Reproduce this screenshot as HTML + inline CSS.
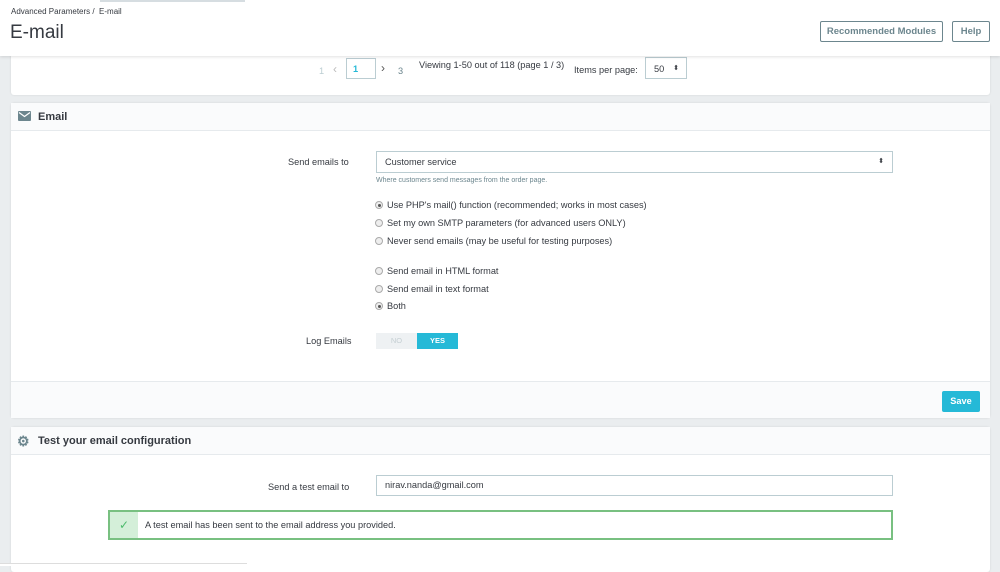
<!DOCTYPE html>
<html><head><style>
*{box-sizing:border-box;margin:0;padding:0}
body{width:1000px;height:566px;overflow:hidden;background:#eaedef;font-family:"Liberation Sans",sans-serif;color:#363a41;position:relative;font-size:9.2px}
.hdr{position:absolute;left:0;top:0;width:1000px;height:56px;background:#fff;box-shadow:0 1px 3px rgba(0,0,0,.12);z-index:2}
.bc{position:absolute;left:11px;top:7px;font-size:8px;color:#363a41}
.title{position:absolute;left:10px;top:22px;font-size:19px;color:#363a41}
.btn{position:absolute;top:21px;height:21px;border:1px solid #6c868e;color:#6c868e;font-size:9.5px;font-weight:bold;line-height:19px;text-align:center;border-radius:2px}
.panel{position:absolute;left:11px;width:979px;background:#fff;border-radius:3px;box-shadow:0 0 2px rgba(0,0,0,.1)}
.ph{height:28px;background:#fafbfc;border-bottom:1px solid #e6eaed;font-size:11px;font-weight:bold;padding-left:27px;line-height:28px;position:relative}
.abs{position:absolute}
.inp{position:absolute;border:1px solid #bbcdd2;background:#fff;height:21px;font-size:9.2px;line-height:19px;padding-left:8px}
.rad{position:absolute;font-size:9.2px}
.rad i{display:inline-block;width:8px;height:8px;border-radius:50%;border:1px solid #aaa;background:#eee;vertical-align:-1px;margin-right:4px;position:relative}
.rad i.on:after{content:"";position:absolute;left:1.5px;top:1.5px;width:3px;height:3px;border-radius:50%;background:#555}
</style></head><body>
<div class="abs" style="left:100px;top:0;width:145px;height:2px;background:#d6dde1;z-index:3"></div>
<div class="hdr">
<div class="bc">Advanced Parameters / &nbsp;E-mail</div>
<div class="title">E-mail</div>
<div class="btn" style="left:820px;width:123px">Recommended Modules</div>
<div class="btn" style="left:952px;width:38px">Help</div>
</div>
<div class="panel" style="top:50px;height:45px">
<div class="abs" style="left:308px;top:16px;color:#bbcdd2">1</div>
<div class="abs" style="left:322px;top:12px;color:#bbb;font-size:12px">‹</div>
<div class="abs" style="left:335px;top:8px;width:30px;height:21px;border:1px solid #bbcdd2;color:#25b9d7;font-weight:bold;padding:5px 6px">1</div>
<div class="abs" style="left:370px;top:11px;color:#555;font-size:12px">›</div>
<div class="abs" style="left:387px;top:16px;color:#6c868e">3</div>
<div class="abs" style="left:408px;top:10px">Viewing 1-50 out of 118 (page 1 / 3)</div>
<div class="abs" style="left:563px;top:15px">Items per page:</div>
<div class="abs" style="left:634px;top:7px;width:42px;height:22px;border:1px solid #bbcdd2;padding:6px 8px;white-space:nowrap">50<span class="abs" style="right:7px;top:6px;font-size:7px">⬍</span></div>
</div>
<div class="panel" style="top:103px;height:315px">
<div class="ph"><svg class="abs" style="left:7px;top:8px" width="13" height="10" viewBox="0 0 13 10"><rect width="13" height="10" rx="1" fill="#6c868e"/><path d="M1 1.5 L6.5 5.5 L12 1.5" stroke="#fff" stroke-width="1.2" fill="none"/></svg>Email</div>
<div class="abs" style="left:277px;top:54px">Send emails to</div>
<div class="inp" style="left:365px;top:48px;width:517px;height:22px;line-height:20px">Customer service<span class="abs" style="right:8px;font-size:7px">⬍</span></div>
<div class="abs" style="left:365px;top:74px;font-size:7px;color:#6c868e">Where customers send messages from the order page.</div>
<div class="rad" style="left:364px;top:97px"><i class="on"></i>Use PHP's mail() function (recommended; works in most cases)</div>
<div class="rad" style="left:364px;top:115px"><i></i>Set my own SMTP parameters (for advanced users ONLY)</div>
<div class="rad" style="left:364px;top:133px"><i></i>Never send emails (may be useful for testing purposes)</div>
<div class="rad" style="left:364px;top:163px"><i></i>Send email in HTML format</div>
<div class="rad" style="left:364px;top:181px"><i></i>Send email in text format</div>
<div class="rad" style="left:364px;top:198px"><i class="on"></i>Both</div>
<div class="abs" style="left:295px;top:233px">Log Emails</div>
<div class="abs" style="left:365px;top:230px;width:41px;height:16px;background:#eef1f3;color:#c5cfd3;font-size:7.5px;text-align:center;line-height:16px">NO</div>
<div class="abs" style="left:406px;top:230px;width:41px;height:16px;background:#25b9d7;color:#fff;font-size:7.5px;font-weight:bold;text-align:center;line-height:16px">YES</div>
<div class="abs" style="left:0;top:278px;width:979px;height:37px;background:#fafbfc;border-top:1px solid #e6eaed"></div>
<div class="abs" style="left:931px;top:288px;width:38px;height:21px;background:#25b9d7;color:#fff;font-weight:bold;text-align:center;line-height:21px;border-radius:2px">Save</div>
</div>
<div class="panel" style="top:427px;height:145px">
<div class="ph"><span class="abs" style="left:6px;top:0;font-size:14px;color:#6c868e">⚙</span>Test your email configuration</div>
<div class="abs" style="left:257px;top:55px">Send a test email to</div>
<div class="inp" style="left:365px;top:48px;width:517px">nirav.nanda@gmail.com</div>
<div class="abs" style="left:97px;top:83px;width:785px;height:30px;border:2px solid #78c081;background:#fff">
<div class="abs" style="left:0;top:0;width:28px;height:26px;background:#d4efd9;color:#4cbb6c;text-align:center;line-height:26px;font-size:12px">✓</div>
<div class="abs" style="left:35px;top:8px">A test email has been sent to the email address you provided.</div>
</div>
</div>
<div class="abs" style="left:0;top:563px;width:247px;height:3px;background:#fff;border-top:1px solid #ddd;z-index:3"></div>
</body></html>
